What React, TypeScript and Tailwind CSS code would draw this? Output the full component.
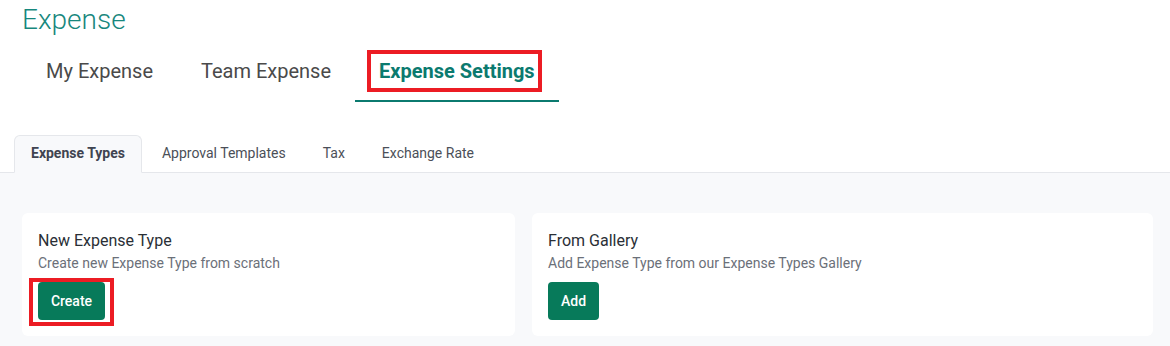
import React from "react";

export default function App() {
  const navTabs = ["My Expense", "Team Expense", "Expense Settings"];
  const subTabs = ["Expense Types", "Approval Templates", "Tax", "Exchange Rate"];
  return (
    <div
      className="w-[1170px] h-[346px] overflow-hidden bg-white"
      style={{ fontFamily: "Roboto, 'Liberation Sans', sans-serif" }}
    >
      <div className="pl-[22px] pt-[2px]">
        <div className="text-[28px] leading-[36px] font-light text-[#17877d]">Expense</div>
      </div>
      <div className="flex pl-[22px] mt-[19px]">
        {navTabs.map((t, i) => {
          const active = i === 2;
          return (
            <div
              key={t}
              className={
                "relative px-6 pb-[15px] border-b-2 text-[20px] leading-[28px] " +
                (active
                  ? "border-[#0b7a6f] text-[#0b7a6f] font-bold"
                  : "border-transparent text-[#4a4a4a]")
              }
            >
              {t}
              {active && (
                <div className="absolute left-[12px] right-[17px] top-[-7px] h-[42px] border-4 border-[#ec1c24]" />
              )}
            </div>
          );
        })}
      </div>
      <div className="flex pl-[14px] mt-[33px] border-b border-[#e5e7eb]">
        {subTabs.map((t, i) => {
          const active = i === 0;
          return (
            <div
              key={t}
              className={
                "h-[38px] -mb-px mr-[3px] px-4 flex items-center text-[14px] border rounded-t-md " +
                (active
                  ? "bg-[#f8f9fb] border-[#e5e7eb] border-b-[#f8f9fb] font-bold text-[#3f4451]"
                  : "border-transparent text-[#4b4f58]")
              }
            >
              <span className="-mt-px">{t}</span>
            </div>
          );
        })}
      </div>
      <div className="bg-[#f8f9fb] pl-[22px] pr-[17px] pt-10 pb-6 flex gap-[17px]">
        <div className="w-[493px] bg-white rounded-md px-4 pt-4 pb-4">
          <div className="text-[16px] leading-6 text-[#2a2f36]">New Expense Type</div>
          <div className="text-[14px] leading-5 text-[#6b7079]">Create new Expense Type from scratch</div>
          <div className="mt-[9px] relative inline-block">
            <button className="h-[38px] w-[67px] rounded bg-[#077a5a] text-white text-[14px] font-medium">
              Create
            </button>
            <div className="absolute left-[-9px] right-[-9px] top-[-4px] bottom-[-6px] border-4 border-[#ec1c24]" />
          </div>
        </div>
        <div className="flex-1 bg-white rounded-md px-4 pt-4 pb-4">
          <div className="text-[16px] leading-6 text-[#2a2f36]">From Gallery</div>
          <div className="text-[14px] leading-5 text-[#6b7079]">Add Expense Type from our Expense Types Gallery</div>
          <div className="mt-[9px]">
            <button className="h-[38px] w-[51px] rounded bg-[#077a5a] text-white text-[14px] font-medium">
              Add
            </button>
          </div>
        </div>
      </div>
    </div>
  );
}
